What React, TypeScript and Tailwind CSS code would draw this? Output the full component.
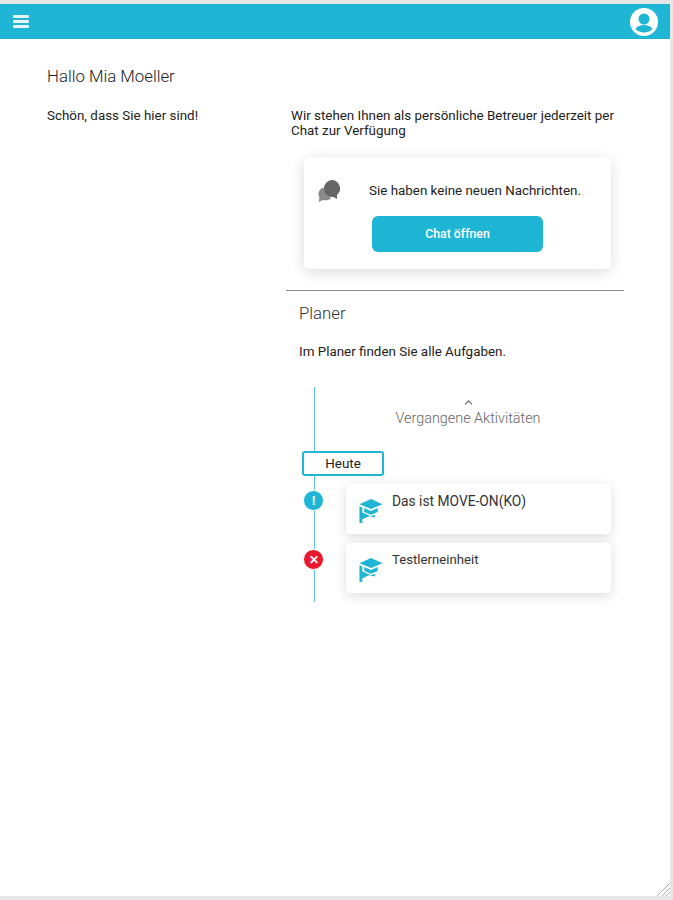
import { ChevronUp } from "lucide-react"

function GradCap({ className }: { className?: string }) {
  return (
    <svg viewBox="0 0 24 26" className={className} fill="#1fb6d6">
      <path d="M12 1 24 6.500 12 11.500 0 6.500z" />
      <path d="M5 10.500 12 13.500l7-3V14.500L12 17.500 5 14.500z" />
      <path d="M0 8.500 3 9.800V15l9 4 4-1.700v3L10 19 3 22v4H0z" />
    </svg>
  )
}

const activities = [
  { title: "Das ist MOVE-ON(KO)", status: "info", size: "text-[13.800px]" },
  { title: "Testlerneinheit", status: "error", size: "text-[13.200px]" },
]

export default function App() {
  return (
    <div className="h-[900px] w-[673px] overflow-hidden bg-[#e6e6e6] pt-1 pr-[3px] pb-1 font-['Roboto',Arial,sans-serif] text-[13.4px] text-[#222]">
      <div className="relative flex h-full flex-col bg-white">
        {/* Top bar */}
        <header className="flex h-[35px] shrink-0 items-center justify-between bg-[#1fb6d6] pr-[12px] pl-[13px]">
          <svg viewBox="0 0 16 13" className="h-[13px] w-[16px]" fill="#fff" opacity="0.9">
            <rect x="0" y="0" width="16" height="3" rx="1" />
            <rect x="0" y="5" width="16" height="3" rx="1" />
            <rect x="0" y="10" width="16" height="3" rx="1" />
          </svg>
          <svg viewBox="0 0 28 28" className="h-[28px] w-[28px]">
            <circle cx="14" cy="14" r="14" fill="#fff" />
            <circle cx="14" cy="11" r="5.500" fill="#1fb6d6" />
            <path d="M5.500 21c1.500-3 5-4 8.500-4s7 1 8.500 4c-2 2.200-5 3.500-8.500 3.500S7.500 23.200 5.500 21z" fill="#1fb6d6" />
          </svg>
        </header>

        <div className="flex flex-1">
          {/* Greeting */}
          <div className="w-[286px] shrink-0 pt-[28px] pl-[47px]">
            <h1 className="text-[16.800px] leading-[18px] font-light">Hallo Mia Moeller</h1>
            <p className="mt-[23px] leading-[16px]">Schön, dass Sie hier sind!</p>
          </div>

          <div className="w-[338px] pt-[69px]">
            <p className="pr-[6px] pl-[5px] leading-[15px]">
              Wir stehen Ihnen als persönliche Betreuer jederzeit per Chat zur Verfügung
            </p>

            {/* Chat card */}
            <div className="mt-[19px] ml-[18px] h-[112px] w-[307px] rounded-[5px] bg-white pt-[22px] pl-[13px] shadow-[0_3px_14px_rgba(0,0,0,0.14)]">
              <div className="flex items-center">
                <svg viewBox="0 0 24 24" className="h-[24px] w-[24px]">
                  <path d="M6 8.500a7 7 0 0 0-3.500 10.200L1.500 23l4.500-2c3 .8 6 .2 8-1.500z" fill="#8a8a8a" />
                  <path d="M14.500 1a8.500 8.500 0 0 1 5.500 15V20l-3.500-2.100a8.500 8.500 0 0 1-2-16.900z" fill="#666" />
                </svg>
                <span className="ml-[28px]">Sie haben keine neuen Nachrichten.</span>
              </div>
              <button className="mt-[13px] ml-[55px] block h-[36px] w-[171px] rounded-[6px] bg-[#1fb6d6] text-[12.300px] font-medium text-white">
                Chat öffnen
              </button>
            </div>

            <hr className="mt-[21px] border-t border-[#8c8c8c]" />

            {/* Planer */}
            <div className="pl-[13px]">
              <h2 className="mt-[13px] text-[16.800px] leading-[18px] font-light text-[#333]">Planer</h2>
              <p className="mt-[22px] leading-[16px]">Im Planer finden Sie alle Aufgaben.</p>
            </div>

            {/* Timeline */}
            <div className="relative mt-[27px] ml-[16px] h-[215px] w-[310px]">
              <div className="absolute top-0 bottom-0 left-[12px] w-px bg-[#5cc6de]" />

              <div className="ml-[44px] flex w-[244px] flex-col items-center pt-[9px] text-[#666]">
                <ChevronUp className="h-[13px] w-[13px]" />
                <span className="mt-[1px] text-[14.400px] leading-[18px] font-light">Vergangene Aktivitäten</span>
              </div>

              <div className="relative mt-[23px] flex h-[25px] w-[82px] items-center justify-center rounded-[3px] border-2 border-[#1fb6d6] bg-white pt-[2px]">
                Heute
              </div>

              <div className="mt-[8px] flex flex-col gap-[9px]">
                {activities.map((a) => (
                  <div key={a.title} className="relative flex items-start">
                    <div className="relative flex h-[50px] w-[44px] shrink-0 items-start pt-[6px] pl-[1px]">
                      <div
                        className={`flex h-[21px] w-[21px] items-center justify-center rounded-full border border-white text-[12px] font-bold text-white ${
                          a.status === "info" ? "bg-[#1fb6d6]" : "bg-[#e8192c]"
                        }`}
                      >
                        {a.status === "info" ? "!" : "✕"}
                      </div>
                    </div>
                    <div className="flex h-[50px] w-[265px] items-start rounded-[4px] bg-white pt-[9px] pl-[13px] shadow-[0_3px_12px_rgba(0,0,0,0.14)]">
                      <GradCap className="mt-[5px] h-[25px] w-[24px] shrink-0" />
                      <span className={`ml-[9px] leading-[16px] text-[#333] ${a.size}`}>{a.title}</span>
                    </div>
                  </div>
                ))}
              </div>
            </div>
          </div>
        </div>

        {/* Resize grip */}
        <svg viewBox="0 0 14 14" className="absolute right-0 bottom-0 h-[14px] w-[14px]" stroke="#aaa" strokeWidth="1">
          <path d="M1 14 14 1M6 14l8-8M10 14l4-4" />
        </svg>
      </div>
    </div>
  )
}
